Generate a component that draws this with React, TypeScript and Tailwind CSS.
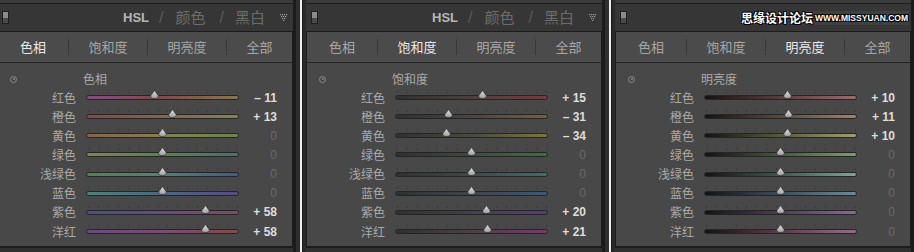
import React from 'react';

const labels = ['红色', '橙色', '黄色', '绿色', '浅绿色', '蓝色', '紫色', '洋红'];
const tabs = ['色相', '饱和度', '明亮度', '全部'];
const tabWidths = ['w-[70px]', 'w-[78px]', 'w-[78px]', 'flex-1'];

type PanelData = {
  active: number;
  heading: string;
  values: number[];
  tracks: string[][];
  watermark?: boolean;
};

const panels: PanelData[] = [
  {
    active: 0,
    heading: '色相',
    values: [-11, 13, 0, 0, 0, 0, 58, 58],
    tracks: [
      ['#844c80', '#844848', '#867650'],
      ['#844846', '#84664a', '#84844e'],
      ['#84644a', '#84824e', '#6c844c'],
      ['#82844e', '#58844c', '#3e7670'],
      ['#4c8456', '#4a8478', '#405c84'],
      ['#4a8478', '#4a6884', '#564a84'],
      ['#4a4e84', '#684a84', '#844a60'],
      ['#684a84', '#7e4a76', '#844a4a']
    ]
  },
  {
    active: 1,
    heading: '饱和度',
    values: [15, -31, -34, 0, 0, 0, 20, 21],
    tracks: [
      ['#303030', '#4a4040', '#7a3a3a'],
      ['#303030', '#4a4540', '#7a5e3a'],
      ['#303030', '#4a4a40', '#7a773a'],
      ['#303030', '#404a40', '#3e703a'],
      ['#303030', '#404a48', '#3a7066'],
      ['#303030', '#40454a', '#3a5a7a'],
      ['#303030', '#45404a', '#5a3a7a'],
      ['#303030', '#4a4046', '#7a3a6a']
    ]
  },
  {
    active: 2,
    heading: '明亮度',
    values: [10, 11, 10, 0, 0, 0, 0, 0],
    tracks: [
      ['#141414', '#5a3c3c', '#a06a6a'],
      ['#141414', '#5a4a3c', '#a0846a'],
      ['#141414', '#5a5a3c', '#a0a06a'],
      ['#141414', '#465a3c', '#7aa06a'],
      ['#141414', '#3c5a50', '#7aa89a'],
      ['#141414', '#3c4e5a', '#6a8a9a'],
      ['#141414', '#4e3c5a', '#8a6a9a'],
      ['#141414', '#5a3c4c', '#9a6a86']
    ],
    watermark: true
  }
];

const formatValue = (v: number) => {
  if (v > 0) return `+ ${v}`;
  if (v < 0) return `– ${Math.abs(v)}`;
  return '0';
};

const Thumb = () => (
  <svg width="9" height="9" viewBox="0 0 9 9">
    <defs>
      <linearGradient id="thumbFill" x1="0" y1="0" x2="0" y2="1">
        <stop offset="0" stopColor="#e4e4e4" />
        <stop offset="1" stopColor="#9c9c9c" />
      </linearGradient>
    </defs>
    <path
      d="M4.5 0.5 L8.3 5.8 Q8.5 8.5 4.5 8.5 Q0.5 8.5 0.7 5.8 Z"
      fill="url(#thumbFill)"
      stroke="#2a2a2a"
      strokeWidth="0.6"
    />
  </svg>
);

const DotTriangle = () => (
  <svg width="8" height="7" viewBox="0 0 8 7">
    {[0, 2, 4, 6].map((x) => (
      <rect key={`a${x}`} x={x} y={0} width="1.2" height="1.2" fill="#9a9a9a" />
    ))}
    {[1, 3, 5].map((x) => (
      <rect key={`b${x}`} x={x} y={2} width="1.2" height="1.2" fill="#9a9a9a" />
    ))}
    {[2, 4].map((x) => (
      <rect key={`c${x}`} x={x} y={4} width="1.2" height="1.2" fill="#9a9a9a" />
    ))}
    <rect x={3} y={6} width="1.2" height="1.2" fill="#9a9a9a" />
  </svg>
);

const Slider = ({ value, stops }: { value: number; stops: string[] }) => (
  <div className="relative ml-[10px] h-[5px] w-[153px]">
    {Array.from({ length: 16 }).map((_, i) => (
      <div
        key={i}
        className="absolute top-[-4px] h-[2px] w-px bg-[#3a3a3a]"
        style={{ left: 2 + (i * 149) / 15 }}
      />
    ))}
    <div
      className="h-full w-full rounded-full border border-[#252525]"
      style={{ background: `linear-gradient(to right, ${stops.join(',')})` }}
    />
    <div
      className="absolute top-[-5px] flex"
      style={{ left: 76.5 + value * 0.74 - 4.5 }}>
      <Thumb />
    </div>
  </div>
);

const Panel = ({ data, first }: { data: PanelData; first?: boolean }) => (
  <div className={`flex h-[252px] w-[307px] shrink-0 ${first ? 'ml-[-7px]' : ''}`}>
    <div className="w-[4px] border-l border-[#1a1a1a] bg-[#2a2a2a]" />
    <div className="flex w-[296px] flex-col">
      <div className="h-[3px] bg-[#3b3b3b]" />
      <div className="h-px bg-[#1e1e1e]" />

      {/* header */}
      <div className="flex h-[27px] items-center bg-[#363636] pl-[5px] pr-[5px]">
        <div className="flex h-[13px] w-[7px] flex-col border border-[#1f1f1f]">
          <div className="flex-1 bg-[#8a8a8a]" />
          <div className="flex-1 bg-[#4a4a4a]" />
        </div>
        {data.watermark ? (
          <div className="ml-auto mr-[-3px] flex items-center whitespace-nowrap bg-[#4a4a4a]/50 px-[1px]">
            <span className="font-['Noto_Sans_CJK_SC',sans-serif] text-[12px] font-bold leading-[14px] text-white [text-shadow:1px_1px_0_#000,-1px_-1px_0_#000,1px_-1px_0_#000,-1px_1px_0_#000]">
              思缘设计论坛
            </span>
            <span className="ml-[2px] font-['Liberation_Sans',sans-serif] text-[8.5px] font-bold leading-[12px] text-white [text-shadow:1px_1px_0_#000,-1px_-1px_0_#000,1px_-1px_0_#000,-1px_1px_0_#000]">
              WWW.MISSYUAN.COM
            </span>
          </div>
        ) : (
          <div className="ml-auto flex items-center">
            <span className="font-['Liberation_Sans',sans-serif] text-[13px] font-bold text-[#b6b6b6]">
              HSL
            </span>
            <span className="ml-[10px] font-['Liberation_Sans',sans-serif] text-[16px] text-[#5c5c5c]">
              /
            </span>
            <span className="ml-[12px] font-['Noto_Sans_CJK_SC',sans-serif] text-[15px] text-[#6c6c6c]">
              颜色
            </span>
            <span className="ml-[14px] font-['Liberation_Sans',sans-serif] text-[16px] text-[#5c5c5c]">
              /
            </span>
            <span className="ml-[11px] font-['Noto_Sans_CJK_SC',sans-serif] text-[15px] text-[#6c6c6c]">
              黑白
            </span>
            <span className="ml-[15px] flex">
              <DotTriangle />
            </span>
          </div>
        )}
      </div>

      {/* box */}
      <div className="flex flex-1 flex-col border-x border-t border-b-2 border-[#1c1c1c]">
        <div className="flex h-[31px] items-center border-b border-[#262626] bg-[#4b4b4b] font-['Noto_Sans_CJK_SC',sans-serif] text-[13px]">
          {tabs.map((t, i) => (
            <React.Fragment key={t}>
              {i > 0 && <div className="h-[16px] w-px bg-[#383838]" />}
              <div
                className={`${tabWidths[i]} text-center ${
                  i === data.active ? 'text-[#e8e8e8]' : 'text-[#a6a6a6]'
                }`}>
                {t}
              </div>
            </React.Fragment>
          ))}
        </div>

        <div className="flex-1 bg-[#484848] font-['Noto_Sans_CJK_SC',sans-serif]">
          <div className="flex h-[25px] items-center pl-[12px] pt-[7px]">
            <div className="flex h-[7px] w-[7px] items-center justify-center rounded-full border border-[#8a8a8a]">
              <div className="h-[2px] w-[2px] rounded-full bg-[#8a8a8a]" />
            </div>
            <span className="ml-[66px] text-[12px] text-[#a8a8a8]">{data.heading}</span>
          </div>
          {labels.map((l, i) => {
            const v = data.values[i];
            return (
              <div key={l} className="flex h-[19.15px] items-center">
                <div className="w-[78px] text-right text-[12px] leading-none text-[#aaaaaa]">
                  {l}
                </div>
                <Slider value={v} stops={data.tracks[i]} />
                <div
                  className={`w-[38px] text-right font-['Liberation_Sans',sans-serif] text-[12px] leading-none ${
                    v === 0 ? 'text-[#6a6a6a]' : 'font-bold text-[#dedede]'
                  }`}>
                  {formatValue(v)}
                </div>
              </div>
            );
          })}
        </div>
      </div>
      <div className="h-[4px] bg-[#303030]" />
    </div>
    <div className="w-[7px] border-l-[3px] border-[#1b1b1b] bg-[#2e2e2e]" />
  </div>
);

export default function App() {
  return (
    <div className="flex h-[252px] w-[914px] gap-[2px] overflow-hidden bg-[#efefef]">
      {panels.map((p, i) => (
        <Panel key={i} data={p} first={i === 0} />
      ))}
    </div>
  );
}
